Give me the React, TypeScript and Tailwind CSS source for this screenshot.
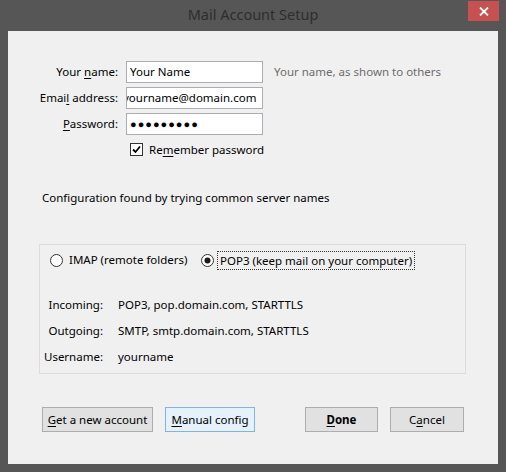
import React from 'react';

const font = { fontFamily: '"Noto Sans", "Open Sans", Arial, sans-serif' };

// Underlined access-key letter
const K = ({ children }: { children: React.ReactNode }) => <span className="underline underline-offset-2">{children}</span>;

const Field = ({ label, value, password, scrolled }: { label: React.ReactNode; value: string; password?: boolean; scrolled?: boolean }) => (
  <>
    <div className="text-right leading-[22px]">{label}</div>
    <div className="h-[22px] w-[137px] border border-[#abadb3] bg-white px-[3px] leading-[20px] overflow-hidden whitespace-nowrap flex">
      {password ? (
        <span className="tracking-[1px] text-[11px]">●●●●●●●●●</span>
      ) : (
        <span className={scrolled ? 'shrink-0 -ml-[7px]' : 'shrink-0'}>{value}</span>
      )}
    </div>
  </>
);

const Radio = ({ checked }: { checked?: boolean }) => (
  <svg width="13" height="13" viewBox="0 0 13 13" className="shrink-0">
    <circle cx="6.5" cy="6.5" r="6" fill="#fff" stroke="#333" strokeWidth="1" />
    {checked && <circle cx="6.5" cy="6.5" r="3" fill="#1a1a1a" />}
  </svg>
);

const Button = ({ children, className = '' }: { children: React.ReactNode; className?: string }) => (
  <div className={`h-[25px] flex items-center justify-center border ${className}`}>{children}</div>
);

export default function App() {
  return (
    <div className="w-[506px] h-[472px] bg-[#565656] flex flex-col text-[11.5px] text-black" style={font}>
      {/* title bar */}
      <div className="h-[31px] flex items-start relative">
        <div className="flex-1 text-center text-[14.5px] text-[#2e2e2e] leading-[29px]">Mail Account Setup</div>
        <div className="absolute right-[7px] top-[1px] w-[31px] h-[20px] bg-[#c75050] flex items-center justify-center">
          <svg width="10" height="9" viewBox="0 0 10 9">
            <path d="M1 0.5 L9 8.5 M9 0.5 L1 8.5" stroke="#fff" strokeWidth="1.8" />
          </svg>
        </div>
      </div>

      {/* client area */}
      <div className="mx-[8px] h-[433px] bg-[#f0f0f0] flex flex-col">
        <div className="pt-[30px] grid grid-cols-[110px_137px_auto] gap-x-[8px] gap-y-[4px] items-center">
          <Field label={<>Your <K>n</K>ame:</>} value="Your Name" />
          <div className="pl-[3px] text-[#6d6d6d] leading-[22px]">Your name, as shown to others</div>
          <Field label={<>Emai<K>l</K> address:</>} value="yourname@domain.com" scrolled />
          <div />
          <Field label={<><K>P</K>assword:</>} value="" password />
          <div />
        </div>

        <div className="mt-[8px] ml-[122px] flex items-center gap-[6px] h-[13px]">
          <svg width="13" height="13" viewBox="0 0 13 13" className="shrink-0">
            <rect x="0.5" y="0.5" width="12" height="12" fill="#fff" stroke="#333" />
            <path d="M3 6.5 L5.5 9 L10 3.5" fill="none" stroke="#000" strokeWidth="1.8" />
          </svg>
          <span>Re<K>m</K>ember password</span>
        </div>

        <div className="mt-[34px] ml-[34px] leading-[16px]">Configuration found by trying common server names</div>

        <div className="mt-[38px] ml-[31px] w-[427px] h-[130px] border border-[#dcdcdc] flex flex-col">
          <div className="mt-[5px] flex items-center h-[20px]">
            <div className="ml-[10px] w-[151px] flex items-center gap-[6px]">
              <Radio />
              <span>IMAP (remote folders)</span>
            </div>
            <div className="flex items-center gap-[3px]">
              <Radio checked />
              <span className="border border-dotted border-[#333] px-[2px] leading-[17px]">POP3 (keep mail on your computer)</span>
            </div>
          </div>
          <div className="mt-[26px] grid grid-cols-[63px_auto] gap-x-[15px] gap-y-[9px] leading-[17px]">
            <div className="text-right">Incoming:</div>
            <div>POP3, pop.domain.com, STARTTLS</div>
            <div className="text-right">Outgoing:</div>
            <div>SMTP, smtp.domain.com, STARTTLS</div>
            <div className="text-right">Username:</div>
            <div>yourname</div>
          </div>
        </div>

        <div className="mt-[33px] ml-[34px] flex items-center">
          <Button className="w-[111px] border-[#adadad] bg-[#e1e1e1]">
            <span><K>G</K>et a new account</span>
          </Button>
          <Button className="ml-[12px] w-[90px] border-[#7eb4ea] bg-[#e5f1fb]">
            <span><K>M</K>anual config</span>
          </Button>
          <Button className="ml-[50px] w-[73px] border-[#adadad] bg-[#e1e1e1] font-bold">
            <span><K>D</K>one</span>
          </Button>
          <Button className="ml-[12px] w-[74px] border-[#adadad] bg-[#e1e1e1]">
            <span>C<K>a</K>ncel</span>
          </Button>
        </div>
      </div>
    </div>
  );
}
